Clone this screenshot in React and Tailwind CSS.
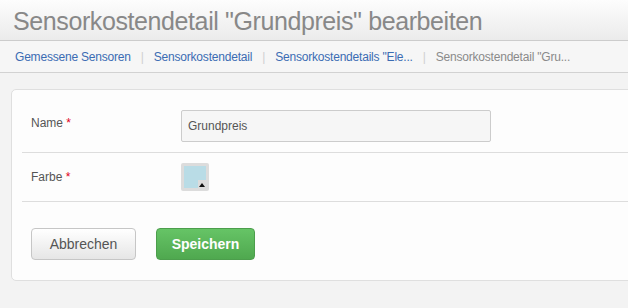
export default function App() {
  const crumbs = [
    { label: "Gemessene Sensoren", link: true },
    { label: "Sensorkostendetail", link: true },
    { label: 'Sensorkostendetails "Ele...', link: true },
    { label: 'Sensorkostendetail "Gru...', link: false },
  ];

  return (
    <div className="w-[628px] h-[308px] overflow-hidden bg-[#f3f3f3] font-['Liberation_Sans',Arial,sans-serif]">
      {/* Page header */}
      <div className="h-[41px] bg-gradient-to-b from-[#fdfdfd] to-[#ebebeb] border-b border-[#cccccc] px-[13px] flex items-center">
        <h1 className="text-[25px] leading-none tracking-[-0.4px] text-[#888888] whitespace-nowrap pt-[3px]">
          Sensorkostendetail "Grundpreis" bearbeiten
        </h1>
      </div>

      {/* Breadcrumb */}
      <div className="h-[32px] bg-[#f6f6f6] border-b border-[#d2d2d2] px-[15px] flex items-center text-[12px] tracking-[-0.2px] whitespace-nowrap">
        {crumbs.map((c, i) => (
          <div key={i} className="flex items-center">
            {i > 0 && <span className="mx-[10px] text-[#d0d0d0]">|</span>}
            <span className={c.link ? "text-[#3b6cb3]" : "text-[#8a8a8a]"}>{c.label}</span>
          </div>
        ))}
      </div>

      {/* Form card */}
      <div className="mt-[16px] ml-[11px] w-[640px] rounded-[5px] border border-[#dfdfdf] bg-[#fdfdfd] p-[10px] text-[12px] text-[#555555]">
        <div className="flex items-center py-[10px] border-b border-[#dddddd]">
          <label className="w-[159px] pl-[9px] -mt-[6px]">
            Name <span className="text-[#e0001a]">*</span>
          </label>
          <input
            type="text"
            defaultValue="Grundpreis"
            className="w-[310px] h-[32px] rounded-[2px] border border-[#cccccc] bg-[#f6f6f6] px-[6px] text-[12px] text-[#555555] outline-none"
          />
        </div>

        <div className="flex items-center py-[10px] border-b border-[#dddddd]">
          <label className="w-[159px] pl-[9px]">
            Farbe <span className="text-[#e0001a]">*</span>
          </label>
          <div className="relative w-[28px] h-[28px] rounded-[2px] bg-[#dcdcdc] p-[3px]">
            <div className="w-full h-full bg-[#b9dce6]"></div>
            <div className="absolute right-[3px] bottom-[3px] w-[8px] h-[8px] bg-[#dcdcdc] flex items-end justify-center">
              <svg width="6" height="4" viewBox="0 0 6 4" className="mb-[1px]">
                <polygon points="3,0 6,4 0,4" fill="#111111" />
              </svg>
            </div>
          </div>
        </div>

        <div className="flex items-center gap-[20px] pl-[9px] pt-[26px] pb-[10px]">
          <button className="w-[105px] h-[32px] rounded-[4px] border border-[#c6c6c6] bg-gradient-to-b from-[#ffffff] to-[#e6e6e6] text-[14px] text-[#555555]">
            Abbrechen
          </button>
          <button className="w-[99px] h-[32px] rounded-[4px] border border-[#4c9e4c] bg-gradient-to-b from-[#66c466] to-[#4fa84f] text-[14px] font-bold text-white">
            Speichern
          </button>
        </div>
      </div>
    </div>
  );
}
